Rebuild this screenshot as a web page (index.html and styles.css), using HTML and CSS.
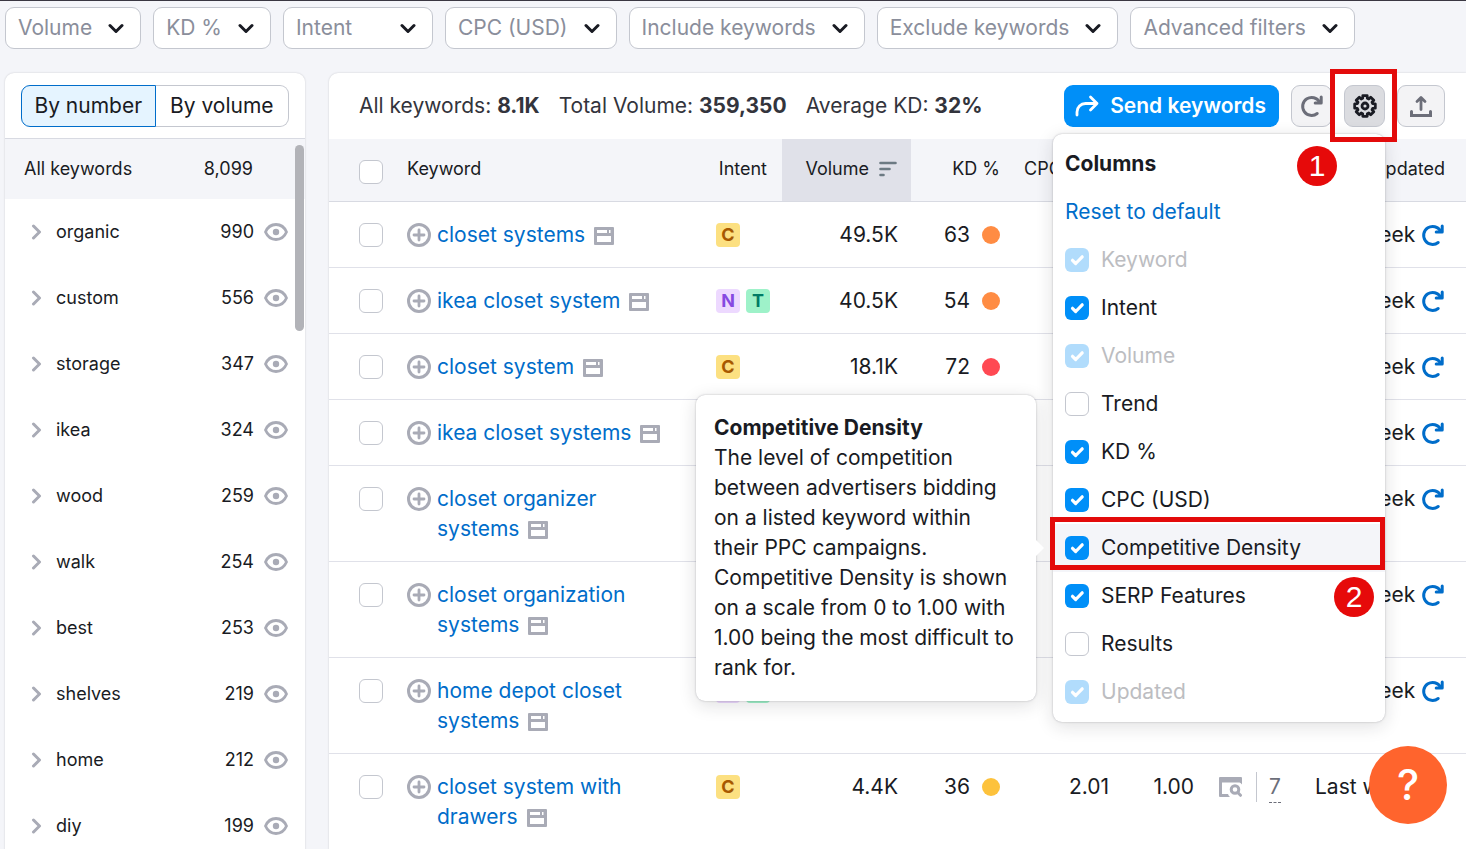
FILE: index.html
```html
<!DOCTYPE html>
<html lang="en">
<head>
    <meta charset="UTF-8">
    <meta name="viewport" content="width=device-width, initial-scale=1.0">
    <title>Keyword Magic Tool</title>
    <link rel="stylesheet" href="styles.css">
</head>
<body>
    <!-- icons -->
    <svg class="sprite" aria-hidden="true">
        <symbol id="chevron-down" viewBox="0 0 16 16">
            <path d="M2 5.5l6 6 6-6" fill="none" stroke="currentColor" stroke-width="3" stroke-linecap="round" stroke-linejoin="round"/>
        </symbol>
        <symbol id="chevron-right" viewBox="0 0 12 16">
            <path d="M3.500 2l6 6-6 6" fill="none" stroke="currentColor" stroke-width="3" stroke-linecap="round" stroke-linejoin="round"/>
        </symbol>
        <symbol id="eye" viewBox="0 0 24 18">
            <path d="M1.5 9C3.500 4.300 7.300 1.500 12 1.500S20.500 4.300 22.500 9C20.500 13.700 16.700 16.500 12 16.500S3.500 13.700 1.500 9z" fill="none" stroke="currentColor" stroke-width="2.800" stroke-linejoin="round"/>
            <circle cx="12" cy="9" r="3.200" fill="currentColor"/>
        </symbol>
        <symbol id="plus" viewBox="0 0 24 24">
            <circle cx="12" cy="12" r="10.500" fill="none" stroke="currentColor" stroke-width="3"/>
            <path d="M12 7v10M7 12h10" fill="none" stroke="currentColor" stroke-width="2.800" stroke-linecap="round"/>
        </symbol>
        <symbol id="serp" viewBox="0 0 20 18">
            <path d="M1 0h18a1 1 0 0 1 1 1v16a1 1 0 0 1-1 1H1a1 1 0 0 1-1-1V1a1 1 0 0 1 1-1zM3 3v3h10V3zM15 3v3h1.500V3zM3 9v6h14V9z" fill="currentColor" fill-rule="evenodd"/>
        </symbol>
        <symbol id="reload" viewBox="0 0 24 24">
            <path d="M17.200 19.500A9 9 0 1 1 19.500 8" fill="none" stroke="currentColor" stroke-width="3" stroke-linecap="round"/>
            <path d="M21.200 3v6h-6" fill="none" stroke="currentColor" stroke-width="3" stroke-linecap="round" stroke-linejoin="round"/>
        </symbol>
        <symbol id="share" viewBox="0 0 24 24">
            <path d="M2 21v-3a8.500 8.500 0 0 1 8.500-8.500H22M15.500 3L22 9.500 15.500 16" fill="none" stroke="currentColor" stroke-width="2.800" stroke-linecap="round" stroke-linejoin="round"/>
        </symbol>
        <symbol id="gear" viewBox="-12 -12 24 24">
            <path d="M10.300-2.200V2.200L7.700 2.300 7 3.800 8.800 5.700 5.700 8.800 3.800 7 2.300 7.700 2.200 10.300H-2.200L-2.300 7.700-3.800 7-5.700 8.800-8.800 5.700-7 3.800-7.700 2.300-10.300 2.200V-2.200L-7.700-2.300-7-3.800-8.800-5.700-5.700-8.800-3.800-7-2.300-7.700-2.200-10.300H2.200L2.300-7.700 3.800-7 5.700-8.800 8.800-5.700 7-3.800 7.700-2.300z" fill="none" stroke="currentColor" stroke-width="2.800" stroke-linejoin="round"/>
            <circle r="3" fill="none" stroke="currentColor" stroke-width="2.800"/>
        </symbol>
        <symbol id="upload" viewBox="0 0 24 24">
            <path d="M2.500 17.500v4h19v-4" fill="none" stroke="currentColor" stroke-width="3" stroke-linecap="round"/>
            <path d="M12 15.500V4M8 7.500L12 3.500l4 4" fill="none" stroke="currentColor" stroke-width="2.800" stroke-linecap="round" stroke-linejoin="round"/>
        </symbol>
        <symbol id="sort" viewBox="0 0 18 16">
            <path d="M1.500 2h15M1.500 8h9M1.500 14h3" fill="none" stroke="currentColor" stroke-width="2.600" stroke-linecap="round"/>
        </symbol>
        <symbol id="serp-search" viewBox="0 0 24 20">
            <path d="M1 0h21a1 1 0 0 1 1 1v6.500a7 7 0 0 0-2.500-2H3V17h6a7 7 0 0 0 2 3H1a1 1 0 0 1-1-1V1a1 1 0 0 1 1-1z" fill="currentColor"/>
            <circle cx="16" cy="12.500" r="3.800" fill="none" stroke="currentColor" stroke-width="3"/>
            <path d="M19 15.800l2.500 2.500" stroke="currentColor" stroke-width="3" stroke-linecap="round"/>
        </symbol>
    </svg>

    <div class="filters">
        <button class="filter">Volume <svg><use href="#chevron-down"/></svg></button>
        <button class="filter">KD % <svg><use href="#chevron-down"/></svg></button>
        <button class="filter filter-wide">Intent <svg><use href="#chevron-down"/></svg></button>
        <button class="filter">CPC (USD) <svg><use href="#chevron-down"/></svg></button>
        <button class="filter">Include keywords <svg><use href="#chevron-down"/></svg></button>
        <button class="filter">Exclude keywords <svg><use href="#chevron-down"/></svg></button>
        <button class="filter">Advanced filters <svg><use href="#chevron-down"/></svg></button>
    </div>

    <div class="content">
        <aside class="groups">
            <div class="groups-sort">
                <button class="pill active">By number</button>
                <button class="pill">By volume</button>
            </div>
            <div class="groups-list">
                <div class="group group-all"><span class="group-name">All keywords</span><span>8,099</span></div>
                <div class="group"><svg class="arrow"><use href="#chevron-right"/></svg><span class="group-name">organic</span><span>990</span><svg class="eye"><use href="#eye"/></svg></div>
                <div class="group"><svg class="arrow"><use href="#chevron-right"/></svg><span class="group-name">custom</span><span>556</span><svg class="eye"><use href="#eye"/></svg></div>
                <div class="group"><svg class="arrow"><use href="#chevron-right"/></svg><span class="group-name">storage</span><span>347</span><svg class="eye"><use href="#eye"/></svg></div>
                <div class="group"><svg class="arrow"><use href="#chevron-right"/></svg><span class="group-name">ikea</span><span>324</span><svg class="eye"><use href="#eye"/></svg></div>
                <div class="group"><svg class="arrow"><use href="#chevron-right"/></svg><span class="group-name">wood</span><span>259</span><svg class="eye"><use href="#eye"/></svg></div>
                <div class="group"><svg class="arrow"><use href="#chevron-right"/></svg><span class="group-name">walk</span><span>254</span><svg class="eye"><use href="#eye"/></svg></div>
                <div class="group"><svg class="arrow"><use href="#chevron-right"/></svg><span class="group-name">best</span><span>253</span><svg class="eye"><use href="#eye"/></svg></div>
                <div class="group"><svg class="arrow"><use href="#chevron-right"/></svg><span class="group-name">shelves</span><span>219</span><svg class="eye"><use href="#eye"/></svg></div>
                <div class="group"><svg class="arrow"><use href="#chevron-right"/></svg><span class="group-name">home</span><span>212</span><svg class="eye"><use href="#eye"/></svg></div>
                <div class="group"><svg class="arrow"><use href="#chevron-right"/></svg><span class="group-name">diy</span><span>199</span><svg class="eye"><use href="#eye"/></svg></div>
                <div class="scrollbar"></div>
            </div>
        </aside>

        <main class="results">
            <div class="toolbar">
                <div class="summary">
                    <span>All keywords: <b>8.1K</b></span>
                    <span>Total Volume: <b>359,350</b></span>
                    <span>Average KD: <b>32%</b></span>
                </div>
                <div class="actions">
                    <button class="send"><svg><use href="#share"/></svg>Send keywords</button>
                    <button class="tool" aria-label="Refresh"><svg><use href="#reload"/></svg></button>
                    <div class="settings">
                        <button class="tool tool-active" aria-label="Columns"><svg><use href="#gear"/></svg></button>
                        <div class="menu">
                            <div class="menu-title">Columns</div>
                            <a class="menu-reset" href="#">Reset to default</a>
                            <label class="option disabled"><input type="checkbox" checked disabled>Keyword</label>
                            <label class="option"><input type="checkbox" checked>Intent</label>
                            <label class="option disabled"><input type="checkbox" checked disabled>Volume</label>
                            <label class="option"><input type="checkbox">Trend</label>
                            <label class="option"><input type="checkbox" checked>KD %</label>
                            <label class="option"><input type="checkbox" checked>CPC (USD)</label>
                            <div class="option-hover">
                                <label class="option"><input type="checkbox" checked>Competitive Density</label>
                                <div class="tooltip" role="tooltip">
                                    <b>Competitive Density</b><br>
                                    The level of competition between advertisers bidding on a listed keyword within their PPC campaigns. Competitive Density is shown on a scale from 0 to 1.00 with 1.00 being the most difficult to rank for.
                                </div>
                                <div class="frame frame-option"></div>
                                <div class="step step-two">2</div>
                            </div>
                            <label class="option"><input type="checkbox" checked>SERP Features</label>
                            <label class="option"><input type="checkbox">Results</label>
                            <label class="option disabled"><input type="checkbox" checked disabled>Updated</label>
                            <div class="step step-one">1</div>
                        </div>
                        <div class="frame frame-gear"></div>
                    </div>
                    <button class="tool tool-export" aria-label="Export"><svg><use href="#upload"/></svg></button>
                </div>
            </div>

            <table>
                <colgroup>
                    <col class="col-check">
                    <col>
                    <col class="col-intent">
                    <col class="col-volume">
                    <col class="col-kd">
                    <col class="col-cpc">
                    <col class="col-com">
                    <col class="col-sf">
                    <col class="col-updated">
                </colgroup>
                <thead>
                    <tr>
                        <th class="check"><input type="checkbox" aria-label="Select all"></th>
                        <th>Keyword</th>
                        <th class="num intent-head">Intent</th>
                        <th class="num sorted">Volume <svg><use href="#sort"/></svg></th>
                        <th class="num">KD %</th>
                        <th class="cpc-head">CPC (USD)</th>
                        <th></th>
                        <th></th>
                        <th class="num">Updated</th>
                    </tr>
                </thead>
                <tbody>
                    <tr>
                        <td class="check"><input type="checkbox" aria-label="closet systems"></td>
                        <td><div class="keyword"><svg class="plus"><use href="#plus"/></svg><span><a href="#">closet systems</a> <svg class="serp"><use href="#serp"/></svg></span></div></td>
                        <td><div class="intents"><span class="intent c">C</span></div></td>
                        <td class="num">49.5K</td>
                        <td><div class="kd">63 <i class="dot orange"></i></div></td>
                        <td></td><td></td><td></td>
                        <td><div class="updated">Last week <svg><use href="#reload"/></svg></div></td>
                    </tr>
                    <tr>
                        <td class="check"><input type="checkbox" aria-label="ikea closet system"></td>
                        <td><div class="keyword"><svg class="plus"><use href="#plus"/></svg><span><a href="#">ikea closet system</a> <svg class="serp"><use href="#serp"/></svg></span></div></td>
                        <td><div class="intents"><span class="intent n">N</span><span class="intent t">T</span></div></td>
                        <td class="num">40.5K</td>
                        <td><div class="kd">54 <i class="dot orange"></i></div></td>
                        <td></td><td></td><td></td>
                        <td><div class="updated">Last week <svg><use href="#reload"/></svg></div></td>
                    </tr>
                    <tr>
                        <td class="check"><input type="checkbox" aria-label="closet system"></td>
                        <td><div class="keyword"><svg class="plus"><use href="#plus"/></svg><span><a href="#">closet system</a> <svg class="serp"><use href="#serp"/></svg></span></div></td>
                        <td><div class="intents"><span class="intent c">C</span></div></td>
                        <td class="num">18.1K</td>
                        <td><div class="kd">72 <i class="dot red"></i></div></td>
                        <td></td><td></td><td></td>
                        <td><div class="updated">Last week <svg><use href="#reload"/></svg></div></td>
                    </tr>
                    <tr>
                        <td class="check"><input type="checkbox" aria-label="ikea closet systems"></td>
                        <td><div class="keyword"><svg class="plus"><use href="#plus"/></svg><span><a href="#">ikea closet systems</a> <svg class="serp"><use href="#serp"/></svg></span></div></td>
                        <td></td><td></td><td></td><td></td><td></td><td></td>
                        <td><div class="updated">Last week <svg><use href="#reload"/></svg></div></td>
                    </tr>
                    <tr>
                        <td class="check"><input type="checkbox" aria-label="closet organizer systems"></td>
                        <td><div class="keyword"><svg class="plus"><use href="#plus"/></svg><span><a href="#">closet organizer systems</a> <svg class="serp"><use href="#serp"/></svg></span></div></td>
                        <td></td><td></td><td></td><td></td><td></td><td></td>
                        <td><div class="updated">Last week <svg><use href="#reload"/></svg></div></td>
                    </tr>
                    <tr>
                        <td class="check"><input type="checkbox" aria-label="closet organization systems"></td>
                        <td><div class="keyword"><svg class="plus"><use href="#plus"/></svg><span><a href="#">closet organization systems</a> <svg class="serp"><use href="#serp"/></svg></span></div></td>
                        <td></td><td></td><td></td><td></td><td></td><td></td>
                        <td><div class="updated">Last week <svg><use href="#reload"/></svg></div></td>
                    </tr>
                    <tr>
                        <td class="check"><input type="checkbox" aria-label="home depot closet systems"></td>
                        <td><div class="keyword"><svg class="plus"><use href="#plus"/></svg><span><a href="#">home depot closet systems</a> <svg class="serp"><use href="#serp"/></svg></span></div></td>
                        <td><div class="intents"><span class="intent n">N</span><span class="intent t">T</span></div></td>
                        <td></td><td></td><td></td><td></td><td></td>
                        <td><div class="updated">Last week <svg><use href="#reload"/></svg></div></td>
                    </tr>
                    <tr>
                        <td class="check"><input type="checkbox" aria-label="closet system with drawers"></td>
                        <td><div class="keyword"><svg class="plus"><use href="#plus"/></svg><span><a href="#">closet system with drawers</a> <svg class="serp"><use href="#serp"/></svg></span></div></td>
                        <td><div class="intents"><span class="intent c">C</span></div></td>
                        <td class="num">4.4K</td>
                        <td><div class="kd">36 <i class="dot yellow"></i></div></td>
                        <td class="num">2.01</td>
                        <td class="num">1.00</td>
                        <td><div class="sf"><svg><use href="#serp-search"/></svg><span class="sf-count"><a href="#">7</a></span></div></td>
                        <td><div class="updated">Last week <svg><use href="#reload"/></svg></div></td>
                    </tr>
                </tbody>
            </table>
        </main>
    </div>

    <button class="help">?</button>
</body>
</html>
```
FILE: styles.css
```css
* {
    box-sizing: border-box;
}

body {
    height: 100vh;
    margin: 0;
    overflow: hidden;
    border-top: 1px solid #3a3742;
    background: #f4f5f9;
    color: #191b23;
    font-family: Inter, sans-serif;
    font-size: 21px;
    line-height: 30px;
}

button {
    font: inherit;
    color: inherit;
    cursor: pointer;
}

a {
    color: #006dca;
    text-decoration: none;
}

b {
    font-weight: 700;
}

.sprite {
    display: none;
}

/* filters */
.filters {
    display: flex;
    gap: 12px;
    padding: 6px 5px 24px;
}

.filter {
    display: flex;
    align-items: center;
    justify-content: space-between;
    gap: 16px;
    height: 42px;
    padding: 0 16px 0 12px;
    border: 1px solid #c4c7cf;
    border-radius: 9px;
    background: #fff;
    color: #8a8e9b;
    white-space: nowrap;
}

.filter-wide {
    min-width: 150px;
}

.filter svg {
    width: 16px;
    height: 16px;
    color: #191b23;
}

.content {
    display: flex;
    align-items: flex-start;
    gap: 24px;
    padding-left: 5px;
}

/* keyword groups */
.groups {
    flex: 0 0 300px;
    border-radius: 9px 9px 0 0;
    background: #fff;
    box-shadow: 0 0 2px rgba(25, 27, 35, 0.2);
    font-size: 18px;
}

.groups-sort {
    display: flex;
    padding: 12px 16px 11px;
    border-bottom: 1px solid #d8dae2;
}

.pill {
    flex: 1;
    height: 42px;
    padding: 0;
    border: 1px solid #c4c7cf;
    border-left: 0;
    border-radius: 0 9px 9px 0;
    background: #fff;
    font-size: 21px;
}

.pill.active {
    border: 1px solid #006dca;
    border-radius: 9px 0 0 9px;
    background: #e5f4ff;
}

.groups-list {
    position: relative;
}

.group {
    display: flex;
    align-items: center;
    height: 66px;
    padding: 0 17px 0 25px;
}

.group-all {
    height: 60px;
    padding: 0 52px 0 19px;
    background: #f4f5f9;
}

.group-name {
    flex: 1;
}

.arrow {
    width: 12px;
    height: 16px;
    margin-right: 14px;
    color: #a9abb6;
}

.eye {
    width: 24px;
    height: 18px;
    margin-left: 10px;
    color: #a9abb6;
}

.scrollbar {
    position: absolute;
    top: 6px;
    right: 1px;
    width: 9px;
    height: 186px;
    border-radius: 5px;
    background: #b2b3b8;
}

/* results */
.results {
    flex: 1;
    min-width: 0;
    border-radius: 9px 0 0 0;
    background: #fff;
    box-shadow: 0 0 2px rgba(25, 27, 35, 0.2);
}

.toolbar {
    display: flex;
    justify-content: space-between;
    padding: 12px 21px 12px 30px;
}

.summary {
    display: flex;
    align-items: center;
    gap: 19px;
    color: #33343c;
    white-space: nowrap;
}

.actions {
    display: flex;
    gap: 12px;
}

.send {
    display: flex;
    align-items: center;
    gap: 11px;
    height: 42px;
    padding: 0 13px 0 11px;
    border: 0;
    border-radius: 9px;
    background: #008ff8;
    color: #fff;
    font-weight: 600;
    white-space: nowrap;
}

.tool {
    display: flex;
    align-items: center;
    justify-content: center;
    width: 41px;
    height: 42px;
    padding: 0;
    border: 1px solid #c4c7cf;
    border-radius: 9px;
    background: #f3f3f5;
    color: #6c6e79;
}

.send svg,
.tool svg {
    width: 24px;
    height: 24px;
}

.tool-active {
    background: #dbdce0;
    color: #191b23;
}

.tool-export {
    width: 48px;
}

.settings {
    position: relative;
}

/* columns menu */
.menu {
    position: absolute;
    top: 49px;
    right: 0;
    z-index: 1;
    width: 332px;
    padding: 6px 0;
    border-radius: 9px;
    background: #fff;
    box-shadow: 0 0 2px rgba(25, 27, 35, 0.3), 0 4px 18px rgba(25, 27, 35, 0.14);
}

.menu-title,
.menu-reset,
.option {
    display: flex;
    align-items: center;
    gap: 12px;
    height: 48px;
    padding: 0 12px;
}

.menu-title {
    font-weight: 700;
}

.option.disabled {
    color: #bcbdc1;
}

.option-hover {
    position: relative;
    background: #f4f5f9;
}

input[type="checkbox"] {
    appearance: none;
    flex: none;
    display: block;
    width: 24px;
    height: 24px;
    margin: 0;
    border: 1px solid #c4c7cf;
    border-radius: 6px;
    background: #fff;
}

input[type="checkbox"]:checked {
    border: 0;
    background: #008ff8 url("data:image/svg+xml,%3Csvg xmlns='http://www.w3.org/2000/svg' viewBox='0 0 24 24'%3E%3Cpath d='M7.500 12.300l3.200 3.200 6.500-6.700' fill='none' stroke='white' stroke-width='3.200' stroke-linecap='round' stroke-linejoin='round'/%3E%3C/svg%3E");
}

input[type="checkbox"]:disabled {
    opacity: 0.3;
}

.tooltip {
    position: absolute;
    top: 50%;
    right: calc(100% + 17px);
    width: 340px;
    padding: 18px;
    transform: translateY(-50%);
    border-radius: 9px;
    background: #fff;
    box-shadow: 0 0 2px rgba(25, 27, 35, 0.3), 0 4px 18px rgba(25, 27, 35, 0.14);
}

.tooltip::after {
    content: "";
    position: absolute;
    top: calc(50% - 8px);
    left: 100%;
    border: 8px solid transparent;
    border-right: 0;
    border-left-color: #fff;
}

/* walkthrough marks */
.frame {
    position: absolute;
    z-index: 2;
    border: 5px solid #e30b0b;
    pointer-events: none;
}

.frame-gear {
    inset: -16px -12px -15px -14px;
}

.frame-option {
    inset: -7px 0 2px -3px;
}

.step {
    position: absolute;
    width: 40px;
    height: 40px;
    border-radius: 50%;
    background: #e60a0a;
    color: #fff;
    font-family: "Liberation Sans", Arial, sans-serif;
    font-size: 30px;
    line-height: 40px;
    text-align: center;
}

.step-one {
    top: 12px;
    right: 48px;
}

.step-two {
    top: 53px;
    right: 11px;
    z-index: 2;
}

/* table */
table {
    width: 100%;
    table-layout: fixed;
    border-collapse: collapse;
}

.col-check { width: 78px; }
.col-intent { width: 82px; }
.col-volume { width: 129px; }
.col-kd { width: 101px; }
.col-cpc { width: 110px; }
.col-com { width: 85px; }
.col-sf { width: 93px; }
.col-updated { width: 166px; }

th {
    height: 62px;
    padding: 0 0 1px;
    border-bottom: 1px solid #d8dae2;
    background: #f4f5f9;
    font-size: 18px;
    font-weight: 400;
    text-align: left;
    white-space: nowrap;
}

th.sorted {
    background: #e0e1e9;
}

th svg {
    width: 18px;
    height: 16px;
    margin: 0 2px 0 5px;
    color: #6c7a83;
    vertical-align: -2px;
}

td {
    padding: 18px 0 17px;
    border-bottom: 1px solid #e0e1e9;
    vertical-align: top;
}

th.num {
    padding-right: 12px;
    text-align: right;
}

td.num {
    padding-right: 13px;
    text-align: right;
}

th.intent-head {
    padding-right: 15px;
}

th.cpc-head {
    padding-left: 12px;
}

th.num:last-child {
    padding-right: 21px;
}

td.check {
    padding: 21px 0 0 30px;
}

th.check {
    padding: 4px 0 0 30px;
}

.keyword {
    display: flex;
    gap: 6px;
    padding-right: 20px;
}

.plus {
    flex: none;
    width: 24px;
    height: 24px;
    margin-top: 3px;
    color: #a9abb6;
}

.serp {
    width: 20px;
    height: 18px;
    margin-left: 3px;
    color: #a9abb6;
    vertical-align: -3px;
}

.intents {
    display: flex;
    gap: 6px;
    padding: 3px 0 0 16px;
}

.intent {
    width: 24px;
    height: 24px;
    border-radius: 4px;
    font-size: 18px;
    font-weight: 700;
    line-height: 24px;
    text-align: center;
}

.intent.c { background: #fce081; color: #a75800; }
.intent.n { background: #edd9ff; color: #8649e1; }
.intent.t { background: #9ef2c9; color: #007c65; }

.kd {
    display: flex;
    align-items: center;
    justify-content: flex-end;
    gap: 12px;
    padding-right: 12px;
}

.dot {
    width: 18px;
    height: 18px;
    border-radius: 50%;
}

.orange { background: #ff8c43; }
.red { background: #ff4953; }
.yellow { background: #fdc23c; }

.sf {
    display: flex;
    align-items: center;
    gap: 13px;
    padding-left: 12px;
    color: #a9abb6;
}

.sf svg {
    width: 24px;
    height: 20px;
}

.sf-count {
    padding-left: 12px;
    border-left: 1px solid #c4c7cf;
}

.sf-count a {
    padding-bottom: 3px;
    border-bottom: 1px dashed #6c6e79;
    color: #6c6e79;
}

.updated {
    display: flex;
    align-items: center;
    justify-content: space-between;
    padding: 0 21px 0 15px;
    white-space: nowrap;
}

.updated svg {
    width: 24px;
    height: 24px;
    color: #006dca;
}

.help {
    position: fixed;
    right: 19px;
    bottom: 25px;
    z-index: 3;
    width: 78px;
    height: 78px;
    border: 0;
    border-radius: 50%;
    background: #ff642d;
    color: #fff;
    font-size: 42px;
    font-weight: 500;
}
```
